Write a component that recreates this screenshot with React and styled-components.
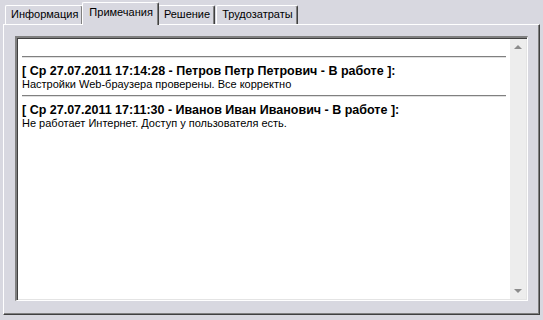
import styled, { createGlobalStyle } from "styled-components";

const Global = createGlobalStyle`
  html, body { margin: 0; padding: 0; background: #d8d8e0; }
  body { font-family: "Liberation Sans", Arial, sans-serif; }
`;

const Window = styled.div`
  width: 543px;
  height: 320px;
  background: #d8d8e0;
  padding: 2px 3px 0 3px;
  box-sizing: border-box;
  display: flex;
  flex-direction: column;
`;

const TabBar = styled.div`
  display: flex;
  align-items: flex-end;
  height: 22px;
  padding-left: 2px;
  position: relative;
  z-index: 2;
`;

const Tab = styled.div`
  box-sizing: border-box;
  height: ${({ $active }) => ($active ? "23px" : "19px")};
  margin: ${({ $active }) => ($active ? "0 -1px -1px -2px" : "0 1px 0 0")};
  padding: ${({ $active }) => ($active ? "3px 5px 0 6px" : "2px 4px 0 5px")};
  background: #d8d8e0;
  border-top: 1px solid #ffffff;
  border-left: 1px solid #ffffff;
  border-right: 1px solid #404040;
  box-shadow: inset -1px 0 0 #808080;
  border-radius: 2px 2px 0 0;
  font-size: 11px;
  color: #000;
  white-space: nowrap;
  position: relative;
  z-index: ${({ $active }) => ($active ? 3 : 1)};
`;

const Panel = styled.div`
  flex: 1;
  margin-bottom: 5px;
  box-sizing: border-box;
  border-top: 1px solid #ffffff;
  border-left: 1px solid #ffffff;
  border-right: 1px solid #404040;
  border-bottom: 1px solid #404040;
  box-shadow: inset -1px -1px 0 #808080;
  padding: 11px 11px 13px 11px;
  display: flex;
`;

const Memo = styled.div`
  flex: 1;
  box-sizing: border-box;
  background: #ffffff;
  border-top: 2px solid #808080;
  border-left: 2px solid #808080;
  border-right: 1px solid #ffffff;
  border-bottom: 1px solid #ffffff;
  box-shadow: inset 1px 1px 0 #404040, inset -1px -1px 0 #e4e4e4;
  display: flex;
`;

const Content = styled.div`
  flex: 1;
  padding: 18px 4px 0 5px;
`;

const Rule = styled.div`
  height: 0;
  border-top: 1px solid #808080;
  border-bottom: 1px solid #e0e0e0;
  margin-bottom: 6px;
`;

const Entry = styled.div`
  margin-bottom: 4px;
`;

const Header = styled.div`
  font-size: 12.5px;
  font-weight: bold;
  line-height: 14px;
  color: #000;
`;

const Body = styled.div`
  font-size: 11px;
  line-height: 13px;
  color: #000;
`;

const ScrollBar = styled.div`
  width: 16px;
  margin: 1px 1px 1px 0;
  background: #ededed;
  display: flex;
  flex-direction: column;
  justify-content: space-between;
  align-items: center;
  padding: 6px 0;
`;

const Arrow = styled.div`
  width: 0;
  height: 0;
  border-left: 4px solid transparent;
  border-right: 4px solid transparent;
  ${({ $down }) =>
    $down ? "border-top: 4px solid #8c8c8c;" : "border-bottom: 4px solid #8c8c8c;"}
`;

const notes = [
  {
    head: "[ Ср 27.07.2011 17:14:28 - Петров Петр Петрович - В работе ]:",
    text: "Настройки Web-браузера проверены. Все корректно",
  },
  {
    head: "[ Ср 27.07.2011 17:11:30 - Иванов Иван Иванович - В работе ]:",
    text: "Не работает Интернет. Доступ у пользователя есть.",
  },
];

export default function App() {
  return (
    <Window>
      <Global />
      <TabBar>
        <Tab>Информация</Tab>
        <Tab $active>Примечания</Tab>
        <Tab>Решение</Tab>
        <Tab>Трудозатраты</Tab>
      </TabBar>
      <Panel>
        <Memo>
          <Content>
            {notes.map((n) => (
              <Entry key={n.head}>
                <Rule />
                <Header>{n.head}</Header>
                <Body>{n.text}</Body>
              </Entry>
            ))}
          </Content>
          <ScrollBar>
            <Arrow />
            <Arrow $down />
          </ScrollBar>
        </Memo>
      </Panel>
    </Window>
  );
}
